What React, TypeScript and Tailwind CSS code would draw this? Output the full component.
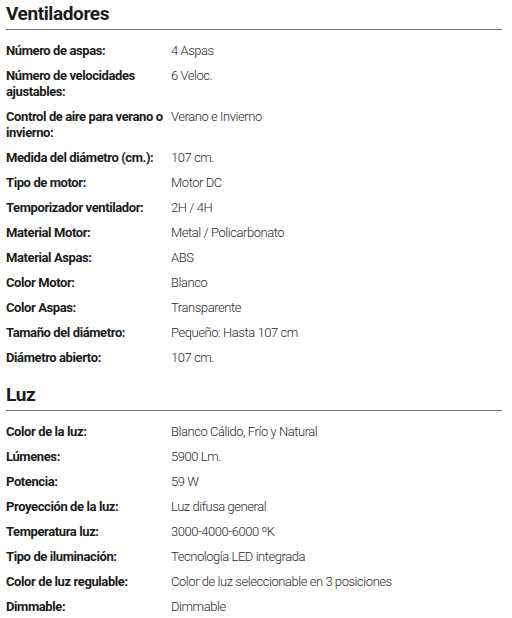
const ventiladores: [string, string][] = [
  ["Número de aspas:", "4 Aspas"],
  ["Número de velocidades ajustables:", "6 Veloc."],
  ["Control de aire para verano o invierno:", "Verano e Invierno"],
  ["Medida del diámetro (cm.):", "107 cm."],
  ["Tipo de motor:", "Motor DC"],
  ["Temporizador ventilador:", "2H / 4H"],
  ["Material Motor:", "Metal / Policarbonato"],
  ["Material Aspas:", "ABS"],
  ["Color Motor:", "Blanco"],
  ["Color Aspas:", "Transparente"],
  ["Tamaño del diámetro:", "Pequeño: Hasta 107 cm"],
  ["Diámetro abierto:", "107 cm."],
];

const luz: [string, string][] = [
  ["Color de la luz:", "Blanco Cálido, Frío y Natural"],
  ["Lúmenes:", "5900 Lm."],
  ["Potencia:", "59 W"],
  ["Proyección de la luz:", "Luz difusa general"],
  ["Temperatura luz:", "3000-4000-6000 ºK"],
  ["Tipo de iluminación:", "Tecnología LED integrada"],
  ["Color de luz regulable:", "Color de luz seleccionable en 3 posiciones"],
  ["Dimmable:", "Dimmable"],
];

const Section = ({ title, rows }: { title: string; rows: [string, string][] }) => (
  <section className="mb-[16px]">
    <h2 className="text-[19px] leading-[26px] font-bold tracking-[-0.4px] text-[#1b1b1b] pb-[2px] border-b border-[#7a7a7a]">
      {title}
    </h2>
    <dl className="pt-[13px] flex flex-col gap-[9px]">
      {rows.map(([label, value]) => (
        <div key={label} className="flex text-[13px] leading-[16px]">
          <dt className="w-[165px] shrink-0 font-bold tracking-[-0.4px] text-[#1b1b1b]">{label}</dt>
          <dd className="font-light tracking-[-0.45px] text-[#2a2a2a]">{value}</dd>
        </div>
      ))}
    </dl>
  </section>
);

const App = () => {
  return (
    <div className="bg-white pl-[6px] pr-[10px] pt-[1px] font-['Roboto',sans-serif]">
      <Section title="Ventiladores" rows={ventiladores} />
      <Section title="Luz" rows={luz} />
    </div>
  );
};

export default App;
